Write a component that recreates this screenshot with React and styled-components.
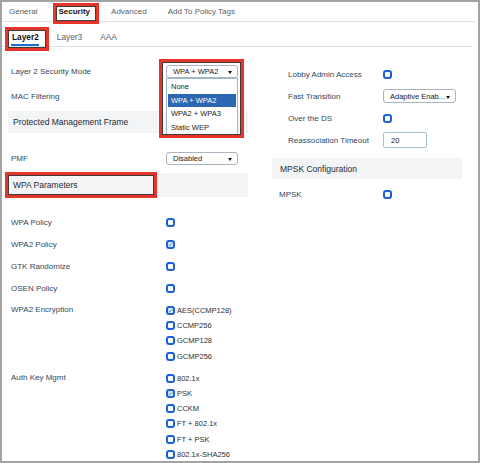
import React from "react";
import styled, { createGlobalStyle } from "styled-components";

const GlobalStyle = createGlobalStyle`
  html, body {
    margin: 0;
    padding: 0;
    background: #fff;
  }
  body {
    font-family: "Liberation Sans", Arial, Helvetica, sans-serif;
  }
`;

const App = () => {
  return (
    <>
      <GlobalStyle />
      <Frame>
        <TabBar>
          <Tab>General</Tab>
          <Tab $active>
            Security
            <Highlight $inset="1px -9px -3px -5px" />
          </Tab>
          <Tab>Advanced</Tab>
          <Tab>Add To Policy Tags</Tab>
        </TabBar>
        <SubTabBar>
          <SubTab $active>
            Layer2
            <Highlight $inset="5px -10px -5px -7px" />
          </SubTab>
          <SubTab>Layer3</SubTab>
          <SubTab>AAA</SubTab>
        </SubTabBar>

        <Body>
          <LeftColumn>
            <Row $h={25}>
              <Label>Layer 2 Security Mode</Label>
              <Dropdown>
                <Select>
                  WPA + WPA2
                  <Caret />
                </Select>
                <Menu>
                  <MenuItem>None</MenuItem>
                  <MenuItem $active>WPA + WPA2</MenuItem>
                  <MenuItem>WPA2 + WPA3</MenuItem>
                  <MenuItem>Static WEP</MenuItem>
                </Menu>
                <Highlight $inset="-6px -6px -60px -7px" />
              </Dropdown>
            </Row>
            <Row $h={25}>
              <Label>MAC Filtering</Label>
            </Row>
            <SectionHeader $h={22} $mt={2}>
              Protected Management Frame
            </SectionHeader>
            <Row $h={25} $mt={13}>
              <Label>PMF</Label>
              <Select>
                Disabled
                <Caret />
              </Select>
            </Row>
            <SectionHeader $h={24} $mt={2}>
              WPA Parameters
              <Highlight $inset="-1px 91px -1px -3px" />
            </SectionHeader>

            <Group>
              <Row $h={22}>
                <Label>WPA Policy</Label>
                <Checkbox />
              </Row>
              <Row $h={22}>
                <Label>WPA2 Policy</Label>
                <Checkbox checked />
              </Row>
              <Row $h={22}>
                <Label>GTK Randomize</Label>
                <Checkbox />
              </Row>
              <Row $h={22}>
                <Label>OSEN Policy</Label>
                <Checkbox />
              </Row>
              <ListRow>
                <ListLabel>WPA2 Encryption</ListLabel>
                <OptionList>
                  <Option>
                    <Checkbox checked />
                    AES(CCMP128)
                  </Option>
                  <Option>
                    <Checkbox />
                    CCMP256
                  </Option>
                  <Option>
                    <Checkbox />
                    GCMP128
                  </Option>
                  <Option>
                    <Checkbox />
                    GCMP256
                  </Option>
                </OptionList>
              </ListRow>
              <ListRow>
                <ListLabel>Auth Key Mgmt</ListLabel>
                <OptionList>
                  <Option>
                    <Checkbox />
                    802.1x
                  </Option>
                  <Option>
                    <Checkbox checked />
                    PSK
                  </Option>
                  <Option>
                    <Checkbox />
                    CCKM
                  </Option>
                  <Option>
                    <Checkbox />
                    FT + 802.1x
                  </Option>
                  <Option>
                    <Checkbox />
                    FT + PSK
                  </Option>
                  <Option>
                    <Checkbox />
                    802.1x-SHA256
                  </Option>
                </OptionList>
              </ListRow>
            </Group>
          </LeftColumn>

          <RightColumn>
            <RightRow>
              <Label $indent={16}>Lobby Admin Access</Label>
              <Checkbox />
            </RightRow>
            <RightRow>
              <Label $indent={16}>Fast Transition</Label>
              <Select $w={73} $h={14}>
                Adaptive Enab...
                <Caret />
              </Select>
            </RightRow>
            <RightRow>
              <Label $indent={16}>Over the DS</Label>
              <Checkbox />
            </RightRow>
            <RightRow>
              <Label $indent={16}>Reassociation Timeout</Label>
              <TextInput>20</TextInput>
            </RightRow>
            <SectionHeader $h={21} $mt={7} $pl={8}>
              MPSK Configuration
            </SectionHeader>
            <RightRow $mt={4}>
              <Label $indent={7}>MPSK</Label>
              <Checkbox />
            </RightRow>
          </RightColumn>
        </Body>
      </Frame>
    </>
  );
};

const Checkbox = ({ checked }) => (
  <Box $checked={checked}>
    {checked && (
      <svg width="5" height="5" viewBox="0 0 5 5">
        <path d="M0.8 2.6 L2 3.8 L4.2 1.2" fill="none" stroke="#3f7fe0" strokeWidth="0.9" />
      </svg>
    )}
  </Box>
);

const Frame = styled.div`
  position: relative;
  width: 480px;
  height: 463px;
  box-sizing: border-box;
  border: 2px solid #a3a3a3;
  background: #fff;
  overflow: hidden;
`;

const Highlight = styled.span`
  position: absolute;
  inset: ${(p) => p.$inset};
  border: 3px solid #e5352b;
  box-shadow: inset 0 0 0 1px #3b3b3b;
  pointer-events: none;
  z-index: 5;
`;

const TabBar = styled.div`
  display: flex;
  gap: 21px;
  height: 19px;
  padding-left: 7px;
  margin-right: 3px;
  border-bottom: 1px solid #dde2e6;
`;

const Tab = styled.div`
  position: relative;
  display: flex;
  align-items: center;
  font-size: 8px;
  color: ${(p) => (p.$active ? "#111" : "#56616b")};
  font-weight: ${(p) => (p.$active ? 700 : 400)};
`;

const SubTabBar = styled.div`
  display: flex;
  gap: 18px;
  height: 24px;
  padding-left: 10px;
  margin-right: 6px;
  border-bottom: 1px solid #dde2e6;
`;

const SubTab = styled.div`
  position: relative;
  display: flex;
  align-items: center;
  padding-top: 6px;
  font-size: 8.3px;
  color: ${(p) => (p.$active ? "#111" : "#56616b")};
  font-weight: ${(p) => (p.$active ? 700 : 400)};
  &::before {
    content: "";
    display: ${(p) => (p.$active ? "block" : "none")};
    position: absolute;
    left: -1px;
    right: 0;
    top: 22px;
    height: 2px;
    background: #1f6fc8;
  }
`;

const Body = styled.div`
  display: flex;
`;

const LeftColumn = styled.div`
  width: 240px;
  margin-left: 6px;
  padding-top: 12px;
  display: flex;
  flex-direction: column;
`;

const RightColumn = styled.div`
  width: 190px;
  margin-left: 24px;
  padding-top: 16px;
  display: flex;
  flex-direction: column;
`;

const Row = styled.div`
  display: grid;
  grid-template-columns: 158px 1fr;
  align-items: center;
  height: ${(p) => p.$h}px;
  margin-top: ${(p) => p.$mt || 0}px;
`;

const RightRow = styled.div`
  display: grid;
  grid-template-columns: 111px 1fr;
  align-items: center;
  height: 22px;
  margin-top: ${(p) => p.$mt || 0}px;
`;

const Label = styled.span`
  padding-left: ${(p) => (p.$indent != null ? p.$indent : 3)}px;
  font-size: 8px;
  color: #33485a;
  white-space: nowrap;
`;

const SectionHeader = styled.div`
  position: relative;
  display: flex;
  align-items: center;
  height: ${(p) => p.$h}px;
  margin-top: ${(p) => p.$mt || 0}px;
  padding-left: ${(p) => p.$pl || 5}px;
  background: #f3f4f5;
  font-size: 8.5px;
  color: #1f2a33;
`;

const Group = styled.div`
  margin-top: 14px;
  display: flex;
  flex-direction: column;
`;

const ListRow = styled.div`
  display: grid;
  grid-template-columns: 158px 1fr;
  align-items: start;
  padding-bottom: 3px;
`;

const ListLabel = styled(Label)`
  line-height: 22px;
`;

const OptionList = styled.div`
  display: flex;
  flex-direction: column;
  padding-top: 4px;
`;

const Option = styled.div`
  display: flex;
  align-items: center;
  gap: 2px;
  height: 15.2px;
  font-size: 7.5px;
  color: #2b2f33;
`;

const Box = styled.span`
  display: inline-flex;
  align-items: center;
  justify-content: center;
  width: 9px;
  height: 9px;
  box-sizing: border-box;
  border: 2px solid #1c5fd8;
  border-radius: 3px;
  background: ${(p) => (p.$checked ? "#dde9fc" : "#fff")};
`;

const Dropdown = styled.div`
  position: relative;
  width: 72px;
`;

const Select = styled.div`
  display: flex;
  align-items: center;
  justify-content: space-between;
  width: ${(p) => p.$w || 72}px;
  height: ${(p) => p.$h || 13}px;
  box-sizing: border-box;
  padding: 0 5px 0 6px;
  border: 1px solid #a9b4be;
  border-radius: 3px;
  background: #fff;
  font-size: 7.5px;
  color: #222;
  white-space: nowrap;
`;

const Caret = styled.span`
  width: 0;
  height: 0;
  border-left: 2.5px solid transparent;
  border-right: 2.5px solid transparent;
  border-top: 3px solid #111;
  margin-top: 2px;
`;

const Menu = styled.div`
  position: absolute;
  top: 100%;
  left: 0;
  width: 72px;
  box-sizing: border-box;
  padding: 1px 0 2px;
  border: 1px solid #9bb6ce;
  background: #fff;
  z-index: 4;
`;

const MenuItem = styled.div`
  display: flex;
  align-items: center;
  height: 13.5px;
  margin: 0 1px;
  padding-left: 3px;
  font-size: 7.5px;
  color: ${(p) => (p.$active ? "#fff" : "#222")};
  background: ${(p) => (p.$active ? "#2d67b1" : "transparent")};
`;

const TextInput = styled.div`
  display: flex;
  align-items: center;
  width: 44px;
  height: 16px;
  box-sizing: border-box;
  padding-left: 7px;
  border: 1px solid #aabfd2;
  border-radius: 2px;
  font-size: 7.5px;
  color: #222;
`;

export default App;
